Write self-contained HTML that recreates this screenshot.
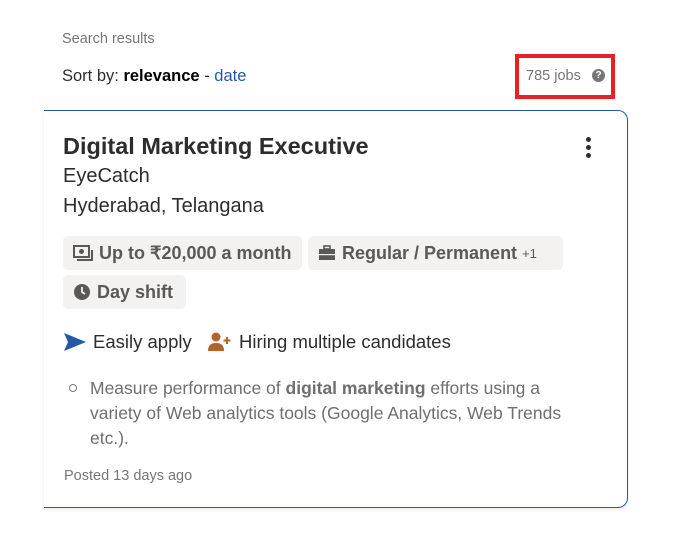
<!DOCTYPE html>
<html><head><style>
body{margin:0;width:682px;height:535px;background:#fff;font-family:"Liberation Sans",sans-serif;position:relative;overflow:hidden;color:#2d2d2d}
.a{position:absolute;white-space:nowrap}
.chip{position:absolute;background:#f3f2f1;border-radius:5px;height:34px;font-weight:bold;font-size:18px;color:#595959;display:flex;align-items:center;padding-left:10px;box-sizing:border-box}
.chip svg{margin-right:6px}
</style></head><body>
<div class="a" style="left:62px;top:31px;font-size:14.5px;color:#767676">Search results</div>
<div class="a" style="left:62px;top:67px;font-size:16.5px;color:#2d2d2d">Sort by: <b style="color:#000">relevance</b> - <span style="color:#2557a7">date</span></div>
<div class="a" style="left:515px;top:54px;width:100px;height:45px;border:4px solid #e8202a;box-sizing:border-box"></div>
<div class="a" style="left:526px;top:68px;font-size:14.5px;color:#767676">785 jobs</div>
<div class="a" style="left:592px;top:69px;width:13px;height:13px;border-radius:50%;background:#767676;color:#fff;font-size:10px;font-weight:bold;text-align:center;line-height:13px">?</div>
<div class="a" style="left:44px;top:110px;width:584px;height:398px;border:1px solid #2557a7;border-left:none;border-radius:0 10px 10px 0;box-sizing:border-box;box-shadow:0 2px 3px rgba(0,0,0,.08)"></div>
<div class="a" style="left:63px;top:133px;font-size:23.5px;font-weight:bold;color:#2d2d2d">Digital Marketing Executive</div>
<div class="a" style="left:586px;top:137px;width:5px;height:5px;border-radius:50%;background:#2d2d2d;box-shadow:0 8px 0 #2d2d2d,0 16px 0 #2d2d2d"></div>
<div class="a" style="left:63px;top:165px;font-size:20px">EyeCatch</div>
<div class="a" style="left:63px;top:195px;font-size:20px">Hyderabad, Telangana</div>
<div class="chip" style="left:63px;top:236px;width:239px"><svg width="20" height="17" viewBox="0 0 20 17"><rect x="1" y="1" width="15" height="11" fill="none" stroke="#595959" stroke-width="2"/><circle cx="8.5" cy="6.5" r="2.5" fill="#595959"/><path d="M4 15h15V5" fill="none" stroke="#595959" stroke-width="2"/></svg>Up to ₹20,000 a month</div>
<div class="chip" style="left:308px;top:236px;width:255px"><svg width="18" height="16" viewBox="0 0 18 16"><rect x="6" y="1" width="6" height="3" fill="none" stroke="#595959" stroke-width="1.6"/><rect x="1" y="4" width="16" height="11" fill="#595959"/><rect x="1" y="9" width="16" height="1.2" fill="#f3f2f1"/></svg>Regular / Permanent <span style="font-weight:normal;font-size:13px;margin-left:5px">+1</span></div>
<div class="chip" style="left:63px;top:275px;width:123px"><svg width="18" height="18" viewBox="0 0 18 18"><circle cx="9" cy="9" r="8" fill="#595959"/><path d="M9 4v5l3 2" fill="none" stroke="#f3f2f1" stroke-width="1.8"/></svg>Day shift</div>
<svg class="a" style="left:64px;top:333px" width="22" height="18" viewBox="0 0 22 18"><path d="M0 0L22 9L0 18L4 9Z" fill="#2557a7"/></svg>
<div class="a" style="left:93px;top:331px;font-size:18.5px">Easily apply</div>
<svg class="a" style="left:208px;top:332px" width="24" height="20" viewBox="0 0 24 20"><circle cx="8" cy="5" r="4.5" fill="#b5622a"/><path d="M0 19c0-6 3-8 8-8s8 2 8 8z" fill="#b5622a"/><path d="M19 5v7M15.5 8.5h7" stroke="#b5622a" stroke-width="2"/></svg>
<div class="a" style="left:239px;top:331px;font-size:18.5px">Hiring multiple candidates</div>
<div class="a" style="left:69px;top:384px;width:6px;height:6px;border:1px solid #767676;border-radius:50%"></div>
<div class="a" style="left:90px;top:376px;font-size:17.5px;line-height:25px;color:#6f6f6f">Measure performance of <b>digital marketing</b> efforts using a<br>variety of Web analytics tools (Google Analytics, Web Trends<br>etc.).</div>
<div class="a" style="left:64px;top:468px;font-size:14.5px;color:#767676">Posted 13 days ago</div>
</body></html>
